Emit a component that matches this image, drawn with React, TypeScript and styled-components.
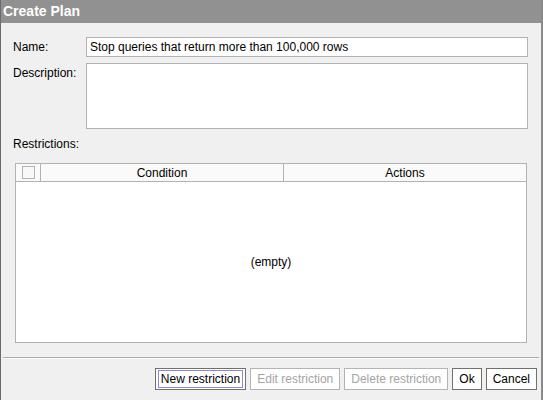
import styled, { createGlobalStyle } from "styled-components";

const GlobalStyle = createGlobalStyle`
  html, body {
    margin: 0;
    padding: 0;
    background: #f0f0f0;
  }
  * { box-sizing: border-box; }
`;

const Dialog = styled.div`
  width: 543px;
  height: 400px;
  display: flex;
  flex-direction: column;
  background: #f0f0f0;
  border-left: 1px solid #6a6a6a;
  border-right: 2px solid #8a8a8a;
  font-family: "Liberation Sans", Arial, sans-serif;
  font-size: 12px;
  color: #000;
`;

const TitleBar = styled.div`
  height: 23px;
  flex: none;
  background: #919191;
  color: #fff;
  font-weight: bold;
  font-size: 14px;
  line-height: 23px;
  padding-left: 2px;
`;

const Body = styled.div`
  flex: 1;
  display: flex;
  flex-direction: column;
  padding: 14px 13px 0 12px;
`;

const FieldRow = styled.div`
  display: grid;
  grid-template-columns: 73px 1fr;
  margin-bottom: 6px;
`;

const Label = styled.label`
  padding-top: 3px;
  line-height: 14px;
`;

const TextInput = styled.input`
  display: block;
  height: 20px;
  border: 1px solid #b2b2b2;
  background: #fff;
  font: inherit;
  padding: 0 3px;
  outline: none;
`;

const TextArea = styled.textarea`
  display: block;
  height: 66px;
  border: 1px solid #b2b2b2;
  background: #fff;
  font: inherit;
  resize: none;
  outline: none;
`;

const SectionLabel = styled.div`
  margin-top: 2px;
  line-height: 14px;
`;

const Table = styled.div`
  margin: 12px 1px 0 2px;
  height: 180px;
  display: flex;
  flex-direction: column;
  border: 1px solid #b2b2b2;
  background: #fff;
`;

const HeaderRow = styled.div`
  display: grid;
  grid-template-columns: 25px 243px 1fr;
  height: 18px;
  flex: none;
  background: #fafafa;
  border-bottom: 1px solid #b2b2b2;
`;

const HeaderCell = styled.div<{ $last?: boolean }>`
  display: flex;
  align-items: center;
  justify-content: center;
  border-right: ${(p) => (p.$last ? "none" : "1px solid #b2b2b2")};
  line-height: 16px;
`;

const CheckBox = styled.span`
  width: 13px;
  height: 13px;
  border: 1px solid #b2b2b2;
  background: #f8f8f8;
`;

const EmptyArea = styled.div`
  flex: 1;
  display: flex;
  align-items: center;
  justify-content: center;
  color: #000;
`;

const Separator = styled.div`
  margin: 14px -11px 0 -10px;
  border-top: 1px solid #aaaaaa;
  border-bottom: 1px solid #fafafa;
`;

const ButtonBar = styled.div`
  display: flex;
  justify-content: flex-end;
  gap: 4px;
  margin: 9px -9px 0 0;
`;

const Button = styled.button<{ $focused?: boolean }>`
  height: 22px;
  padding: 0 ${(p) => (p.$focused ? "2px" : "4px")};
  font: inherit;
  font-size: 12px;
  background: #fff;
  color: ${(p) => (p.disabled ? "#a4a4a4" : "#000")};
  border: 1px solid ${(p) => (p.disabled ? "#b4b4b4" : "#707070")};
  cursor: default;

  & > span {
    display: block;
    line-height: 16px;
    padding: 0 ${(p) => (p.$focused ? "2px" : "1px")};
    border: 1px solid ${(p) => (p.$focused ? "#8c88d6" : "transparent")};
  }
`;

export default function App() {
  return (
    <>
      <GlobalStyle />
      <Dialog>
        <TitleBar>Create Plan</TitleBar>
        <Body>
          <FieldRow>
            <Label>Name:</Label>
            <TextInput defaultValue="Stop queries that return more than 100,000 rows" />
          </FieldRow>
          <FieldRow>
            <Label>Description:</Label>
            <TextArea />
          </FieldRow>
          <SectionLabel>Restrictions:</SectionLabel>
          <Table>
            <HeaderRow>
              <HeaderCell>
                <CheckBox />
              </HeaderCell>
              <HeaderCell>Condition</HeaderCell>
              <HeaderCell $last>Actions</HeaderCell>
            </HeaderRow>
            <EmptyArea>(empty)</EmptyArea>
          </Table>
          <Separator />
          <ButtonBar>
            <Button $focused>
              <span>New restriction</span>
            </Button>
            <Button disabled>
              <span>Edit restriction</span>
            </Button>
            <Button disabled>
              <span>Delete restriction</span>
            </Button>
            <Button>
              <span>Ok</span>
            </Button>
            <Button>
              <span>Cancel</span>
            </Button>
          </ButtonBar>
        </Body>
      </Dialog>
    </>
  );
}
